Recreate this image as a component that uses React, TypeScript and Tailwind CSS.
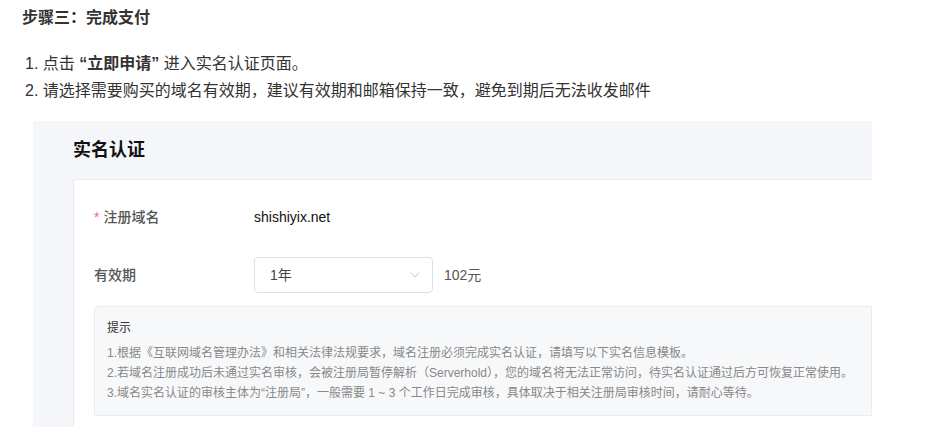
import { ChevronDown } from "lucide-react";

const font = "font-['Liberation_Sans','Noto_Sans_CJK_SC',sans-serif]";

const tips = [
  "1.根据《互联网域名管理办法》和相关法律法规要求，域名注册必须完成实名认证，请填写以下实名信息模板。",
  "2.若域名注册成功后未通过实名审核，会被注册局暂停解析（Serverhold），您的域名将无法正常访问，待实名认证通过后方可恢复正常使用。",
  "3.域名实名认证的审核主体为“注册局”，一般需要 1 ~ 3 个工作日完成审核，具体取决于相关注册局审核时间，请耐心等待。",
];

export default function App() {
  return (
    <main className={`${font} bg-white w-[952px] h-[444px] overflow-hidden px-[22px] pt-[8px] text-[#333]`}>
      <h1 className="text-[16px] font-bold leading-[20px]">步骤三：完成支付</h1>

      {/* Steps */}
      <ol className="mt-[23px] pl-[3px] text-[16px] text-[#333]">
        <li className="leading-[26px]">
          1. 点击 <span className="font-bold">“立即申请”</span> 进入实名认证页面。
        </li>
        <li className="leading-[27px]">2. 请选择需要购买的域名有效期，建议有效期和邮箱保持一致，避免到期后无法收发邮件</li>
      </ol>

      {/* Screenshot of the form */}
      <div className="ml-[11px] mt-[17px] w-[839px] h-[306px] bg-[#f5f6fa] overflow-hidden pl-[40px] pt-[17px]">
        <h2 className="text-[18px] font-bold leading-[24px] text-[#111]">实名认证</h2>

        <div className="mt-[17px] h-[300px] bg-white border-l border-t border-[#e8eaf0] rounded-tl-[4px] pl-[20px] pt-[19px]">
          <div className="flex items-center h-[36px]">
            <div className="w-[160px] text-[14px] font-medium text-[#555]">
              <span className="text-[#f56c6c] mr-[4px]">*</span>注册域名
            </div>
            <span className="text-[14px] text-[#111]">shishiyix.net</span>
          </div>

          <div className="flex items-center h-[36px] mt-[22px]">
            <div className="w-[160px] text-[14px] font-medium text-[#555]">有效期</div>
            <div className="w-[179px] h-[36px] border border-[#dcdfe6] rounded-[4px] flex items-center justify-between pl-[15px] pr-[9px] text-[14px] text-[#444]">
              <span>1年</span>
              <ChevronDown size={16} strokeWidth={1.5} className="text-[#c0c4cc]" />
            </div>
            <span className="ml-[11px] text-[14px] text-[#555]">102元</span>
          </div>

          <div className="mt-[13px] h-[110px] bg-[#f7f8fa] border border-[#eaecf0] rounded-tl-[4px] px-[12px] pt-[11px]">
            <div className="text-[12px] leading-[20px] text-[#333] mb-[5px]">提示</div>
            {tips.map((t) => (
              <p key={t} className="text-[12px] leading-[20px] text-[#888] whitespace-nowrap">
                {t}
              </p>
            ))}
          </div>
        </div>
      </div>
    </main>
  );
}
